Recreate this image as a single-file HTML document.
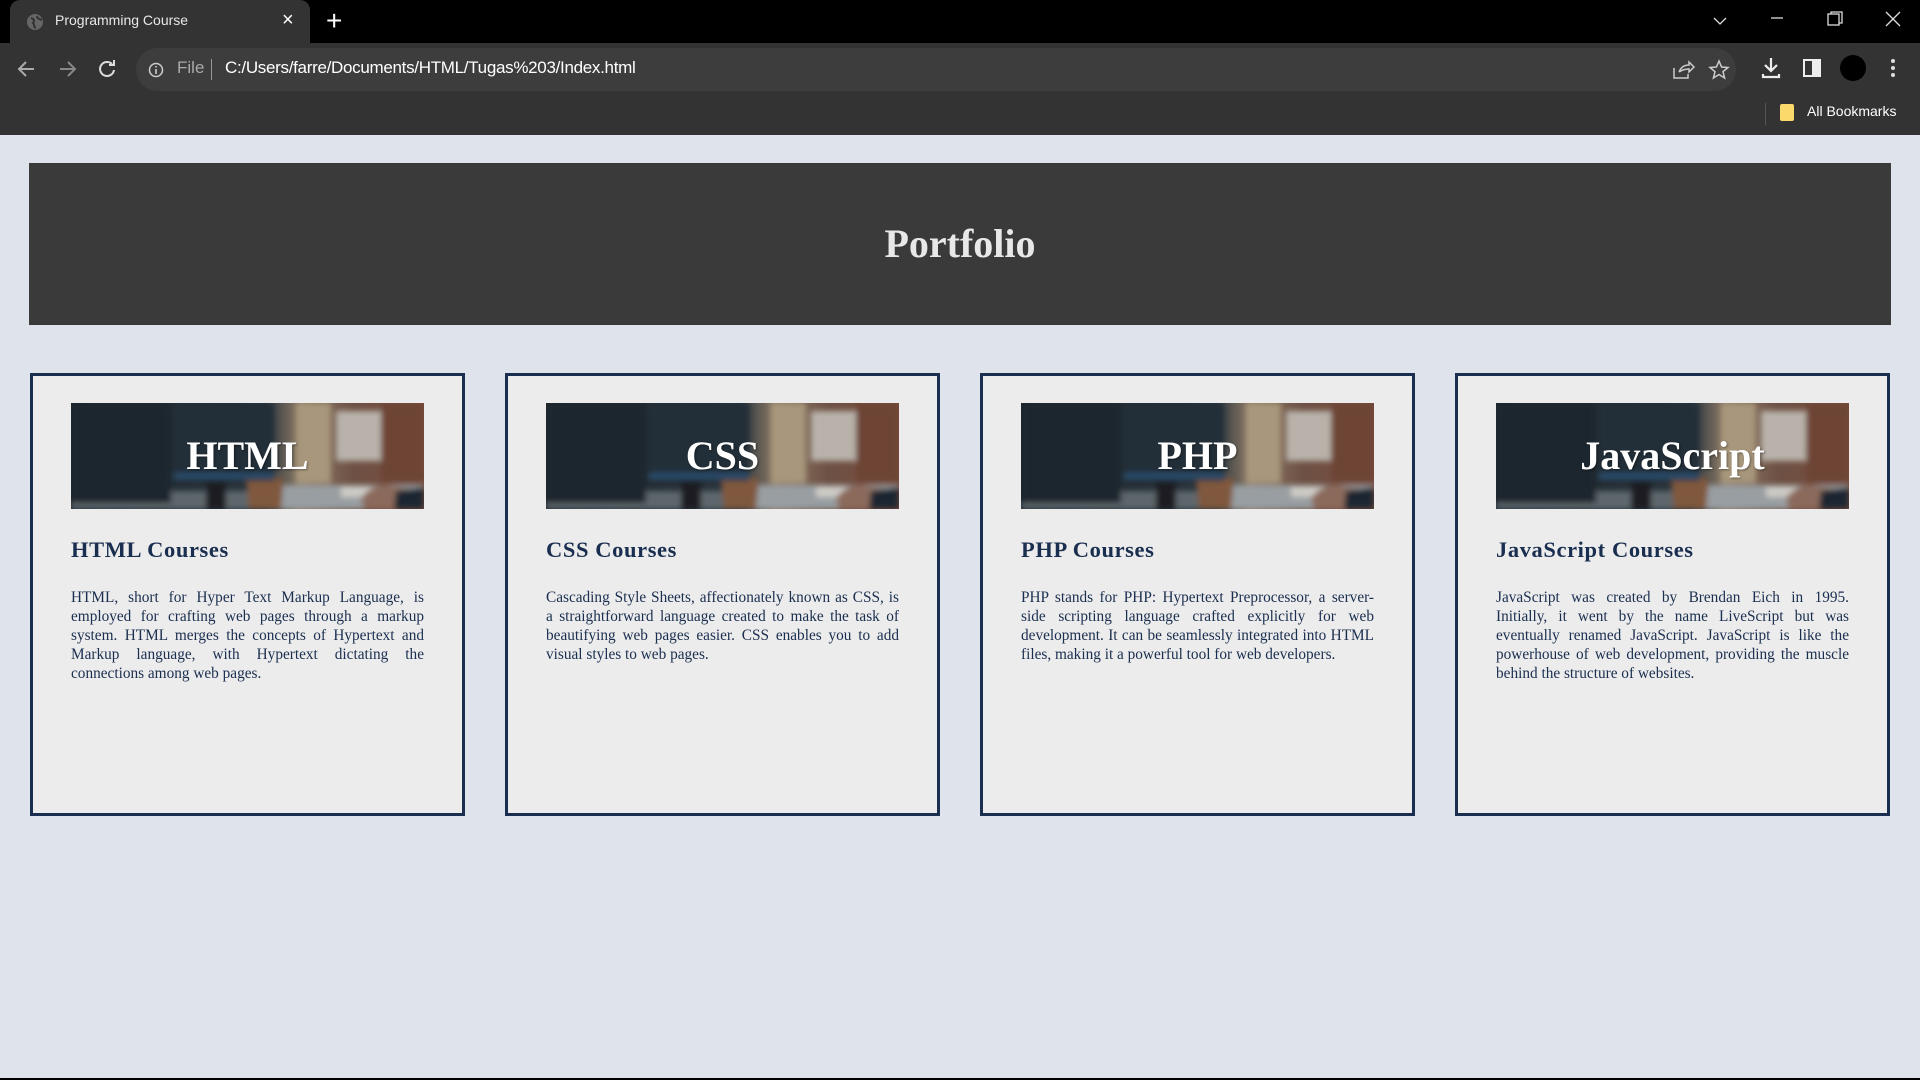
<!DOCTYPE html>
<html><head><meta charset="utf-8">
<style>
*{margin:0;padding:0;box-sizing:border-box}
body{width:1920px;height:1080px;overflow:hidden;background:#dfe3ec;position:relative;font-family:"Liberation Serif",serif}
.tabbar{position:absolute;left:0;top:0;width:1920px;height:43px;background:#000}
.tab{position:absolute;left:10px;top:0;width:300px;height:43px;background:#333;border-radius:10px 10px 0 0}
.tab .t{position:absolute;left:45px;top:12px;font:14px "Liberation Sans",sans-serif;color:#e8e8e8}
.toolbar{position:absolute;left:0;top:43px;width:1920px;height:92px;background:#333}
.omni{position:absolute;left:136px;top:5px;width:1600px;height:43px;background:#3d3d3d;border-radius:22px}
.url{position:absolute;left:225px;top:15px;font:17px "Liberation Sans",sans-serif;color:#fff;letter-spacing:-0.3px}
.file{position:absolute;left:177px;top:15px;font:17px "Liberation Sans",sans-serif;color:#aaa}
.bm{position:absolute;left:1807px;top:60px;font:14px "Liberation Sans",sans-serif;color:#fff}
.hdr{position:absolute;left:29px;top:163px;width:1862px;height:162px;background:#3a3a3a;color:#e8e8e8;text-align:center;font-weight:bold;font-size:40px;line-height:162px}
.card{position:absolute;top:373px;width:435px;height:443px;background:#ececec;border:3px solid #1a2e4f}
.img{position:absolute;left:38px;top:27px;width:353px;height:106px;overflow:hidden}
.img .lab{position:absolute;left:0;top:0;width:353px;height:106px;text-align:center;line-height:106px;font-weight:bold;font-size:40px;color:#fff;text-shadow:1px 1px 2px rgba(0,0,0,.4)}
.card h2{position:absolute;left:38px;top:161px;font-size:22.5px;color:#1a2e4f;font-weight:bold;letter-spacing:.6px}
.card p{position:absolute;left:38px;top:212px;width:353px;font-size:15.3px;line-height:19px;color:#1a2e4f;text-align:justify}
.bot{position:absolute;left:0;top:1078px;width:1920px;height:2px;background:#000}
</style></head><body>
<div class="tabbar"><div class="tab">
<svg style="position:absolute;left:16px;top:13px" width="18" height="18"><circle cx="9" cy="9" r="8" fill="#666"/><path d="M5 5c3 1 4 3 2 5 2 2 0 4 3 5M11 3c0 3 3 3 5 4" stroke="#333" stroke-width="2" fill="none"/></svg>
<div class="t">Programming Course</div>
<div style="position:absolute;left:272px;top:9px;color:#fff;font:20px 'Liberation Sans',sans-serif">×</div></div>
<div style="position:absolute;left:326px;top:5px;color:#fff;font:28px 'Liberation Sans',sans-serif">+</div>
<svg style="position:absolute;left:1710px;top:10px" width="200" height="24" stroke="#ddd" fill="none" stroke-width="1.3"><path d="M4 8l6 6 6-6"/><path d="M61 8h12"/><rect x="118" y="4" width="11" height="11"/><path d="M121 4v-2h11v11h-3"/><path d="M176 2l14 14M190 2l-14 14"/></svg>
</div>
<div class="toolbar">
<svg style="position:absolute;left:14px;top:14px" width="110" height="24" stroke="#aaa" fill="none" stroke-width="2"><path d="M20 12H6M12 5l-7 7 7 7"/><path d="M46 12h14M54 5l7 7-7 7" stroke="#888"/><path d="M98 7a7 7 0 1 0 2 6M100 3v5h-5" stroke="#ddd"/></svg>
<div class="omni">
<svg style="position:absolute;left:12px;top:14px" width="16" height="16"><circle cx="8" cy="8" r="6.5" stroke="#ccc" stroke-width="1.5" fill="none"/><path d="M8 7v5M8 4v1.5" stroke="#ccc" stroke-width="1.6"/></svg>
<div style="position:absolute;left:75px;top:11px;width:1px;height:21px;background:#999"></div>
<svg style="position:absolute;left:1535px;top:10px" width="60" height="24" stroke="#ccc" fill="none" stroke-width="1.5"><path d="M3 10v10h14v-4M8 14c2-5 6-7 10-7V4l5 5-5 5v-3c-4 0-7 1-10 3"/><path d="M48 3l2.6 6 6.4.5-5 4.2 1.6 6.3-5.6-3.5-5.6 3.5 1.6-6.3-5-4.2 6.4-.5z"/></svg>
</div>
<div class="file" style="left:177px;top:15px">File</div>
<div class="url">C:/Users/farre/Documents/HTML/Tugas%203/Index.html</div>
<svg style="position:absolute;left:1760px;top:12px" width="150" height="30"><path d="M11 3v12M5 10l6 6 6-6M3 19v3h16v-3" stroke="#eee" stroke-width="2.2" fill="none"/><rect x="44" y="5" width="16" height="16" fill="none" stroke="#eee" stroke-width="2"/><rect x="52" y="5" width="8" height="16" fill="#eee"/><circle cx="93" cy="13" r="13" fill="#000"/><circle cx="133" cy="6" r="2" fill="#ddd"/><circle cx="133" cy="13" r="2" fill="#ddd"/><circle cx="133" cy="20" r="2" fill="#ddd"/></svg>
<div style="position:absolute;left:1765px;top:60px;width:1px;height:22px;background:#555"></div>
<div style="position:absolute;left:1780px;top:61px;width:14px;height:17px;background:#fbd96a;border-radius:2px"></div>
<div class="bm">All Bookmarks</div>
</div>

<div class="hdr">Portfolio</div>

<svg width="0" height="0" style="position:absolute"><defs>
<linearGradient id="bg" x1="0" x2="1"><stop offset="0" stop-color="#1c252c"/><stop offset=".55" stop-color="#2a353d"/><stop offset=".65" stop-color="#8d7a66"/><stop offset=".8" stop-color="#6d5144"/><stop offset="1" stop-color="#7a4c3c"/></linearGradient>
<filter id="bl"><feGaussianBlur stdDeviation="3"/></filter>
<g id="pic">
<rect width="353" height="106" fill="url(#bg)"/>
<g filter="url(#bl)">
<rect x="225" y="0" width="35" height="80" fill="#a8977c"/>
<rect x="265" y="8" width="45" height="50" fill="#b8b2aa"/>
<rect x="310" y="0" width="43" height="80" fill="#6e4536"/>
<rect x="0" y="88" width="353" height="18" fill="#5d666c"/>
<rect x="200" y="82" width="153" height="24" fill="#989ea2"/>
<rect x="270" y="84" width="50" height="10" fill="#cfccc6"/>
<path d="M175 75h38l-3 31h-32z" fill="#80583e"/>
<path d="M290 95c10-12 20-15 30-12l33 5v18h-60z" fill="#8b6a5c"/>
<path d="M325 88l28-4v22h-30z" fill="#1f2530"/>
<rect x="0" y="0" width="100" height="100" fill="#1c262d"/>
<rect x="103" y="0" width="100" height="78" fill="#232f38"/>
<rect x="103" y="70" width="100" height="6" fill="#2c4e6c"/>
<rect x="135" y="78" width="20" height="28" fill="#1a1f24"/>
</g>
</g></defs></svg>

<div class="card" style="left:30px"><div class="img"><svg width="353" height="106"><use href="#pic"/></svg><div class="lab">HTML</div></div>
<h2>HTML Courses</h2>
<p>HTML, short for Hyper Text Markup Language, is employed for crafting web pages through a markup system. HTML merges the concepts of Hypertext and Markup language, with Hypertext dictating the connections among web pages.</p></div>

<div class="card" style="left:505px"><div class="img"><svg width="353" height="106"><use href="#pic"/></svg><div class="lab">CSS</div></div>
<h2>CSS Courses</h2>
<p>Cascading Style Sheets, affectionately known as CSS, is a straightforward language created to make the task of beautifying web pages easier. CSS enables you to add visual styles to web pages.</p></div>

<div class="card" style="left:980px"><div class="img"><svg width="353" height="106"><use href="#pic"/></svg><div class="lab">PHP</div></div>
<h2>PHP Courses</h2>
<p>PHP stands for PHP: Hypertext Preprocessor, a server-side scripting language crafted explicitly for web development. It can be seamlessly integrated into HTML files, making it a powerful tool for web developers.</p></div>

<div class="card" style="left:1455px"><div class="img"><svg width="353" height="106"><use href="#pic"/></svg><div class="lab">JavaScript</div></div>
<h2>JavaScript Courses</h2>
<p>JavaScript was created by Brendan Eich in 1995. Initially, it went by the name LiveScript but was eventually renamed JavaScript. JavaScript is like the powerhouse of web development, providing the muscle behind the structure of websites.</p></div>

<div class="bot"></div>
</body></html>
